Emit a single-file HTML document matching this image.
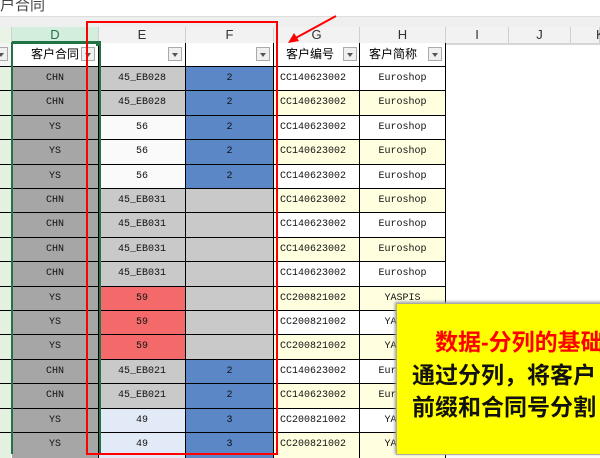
<!DOCTYPE html><html><head><meta charset="utf-8"><style>
body{margin:0;width:600px;height:445px;overflow:hidden;background:#fff;position:relative;font-family:"Liberation Sans","Noto Sans CJK SC",sans-serif}
.a{position:absolute}
.r{position:absolute;left:0;width:600px;height:26px}
.r div{position:absolute;top:0;height:26px;border-top:1px solid #000;box-sizing:border-box;text-align:center;line-height:24px;font-family:"Liberation Mono","Noto Sans CJK SC",monospace;font-size:10px;color:#111}
.c0{left:0;width:11px;background:#e4f1e0}
.cd{left:12px;width:87px;background:#a6a6a6;border-right:1px solid #000}
.ce{left:99px;width:87px;background:#c9c9c9;border-right:1px solid #000}
.cf{left:186px;width:88px;background:#c9c9c9;border-right:1px solid #000}
.cg{left:274px;width:86px;background:#fff;border-right:1px solid #000;text-align:left!important;padding-left:6px}
.ch{left:360px;width:86px;background:#fff;border-right:1px solid #000}
.y{background:#ffffe0!important}
.b{background:#5b87c7!important}
.w{background:#fafafa!important}
.p{background:#f46a6a!important}
.lb{background:#e3eaf7!important}
.hd{position:absolute;top:27px;height:16px;line-height:16px;text-align:center;font-size:13px;color:#333;background:#f2f2f2;border-right:1px solid #d0d0d0}
.fl{position:absolute;top:43px;height:23px;line-height:22px;font-size:12px;background:#fff;border-right:1px solid #000;text-align:center;box-sizing:border-box}
.dd{position:absolute;top:4px;width:14px;height:14px;border:1px solid #aaa;background:#f0f0f0;box-sizing:border-box}
.dd:after{content:"";position:absolute;left:3px;top:5px;border-left:3.5px solid transparent;border-right:3.5px solid transparent;border-top:4px solid #555}
</style></head><body>
<div class="a" style="left:0;top:-6px;font-size:15px;color:#444">户合同</div>
<div class="a" style="left:0;top:16px;width:600px;height:11px;background:#efefef;border-top:1px solid #ddd"></div>
<div class="hd" style="left:0;width:11px;background:#e9f3e6"></div>
<div class="hd" style="left:12px;width:86px;background:#d3eedd;color:#217346;border-bottom:2px solid #217346;height:14px">D</div>
<div class="hd" style="left:99px;width:86px">E</div>
<div class="hd" style="left:186px;width:87px">F</div>
<div class="hd" style="left:274px;width:85px">G</div>
<div class="hd" style="left:360px;width:85px">H</div>
<div class="hd" style="left:446px;width:62px">I</div>
<div class="hd" style="left:509px;width:61px">J</div>
<div class="hd" style="left:571px;width:29px;text-align:left;padding-left:25px;box-sizing:border-box">K</div>
<div class="a" style="left:0;top:43px;width:600px;height:2px;background:#d6d6d6"></div>
<div class="fl" style="left:0;width:12px;background:#f4f4f4"><div class="dd" style="left:-6px"></div></div>
<div class="fl" style="left:12px;width:87px">客户合同<div class="dd" style="left:69px"></div></div>
<div class="fl" style="left:99px;width:87px"><div class="dd" style="left:69px"></div></div>
<div class="fl" style="left:186px;width:88px"><div class="dd" style="left:70px"></div></div>
<div class="fl" style="left:274px;width:86px;text-align:left;padding-left:12px">客户编号<div class="dd" style="left:69px"></div></div>
<div class="fl" style="left:360px;width:86px;text-align:left;padding-left:9px">客户简称<div class="dd" style="left:68px"></div></div>

<div class="r" style="top:66px"><div class="c0"></div><div class="cd">CHN</div><div class="ce">45_EB028</div><div class="cf b">2</div><div class="cg">CC140623002</div><div class="ch">Euroshop</div></div>
<div class="r" style="top:90px"><div class="c0"></div><div class="cd">CHN</div><div class="ce">45_EB028</div><div class="cf b">2</div><div class="cg y">CC140623002</div><div class="ch y">Euroshop</div></div>
<div class="r" style="top:115px"><div class="c0"></div><div class="cd">YS</div><div class="ce w">56</div><div class="cf b">2</div><div class="cg">CC140623002</div><div class="ch">Euroshop</div></div>
<div class="r" style="top:139px"><div class="c0"></div><div class="cd">YS</div><div class="ce w">56</div><div class="cf b">2</div><div class="cg y">CC140623002</div><div class="ch y">Euroshop</div></div>
<div class="r" style="top:164px"><div class="c0"></div><div class="cd">YS</div><div class="ce w">56</div><div class="cf b">2</div><div class="cg">CC140623002</div><div class="ch">Euroshop</div></div>
<div class="r" style="top:188px"><div class="c0"></div><div class="cd">CHN</div><div class="ce">45_EB031</div><div class="cf"></div><div class="cg y">CC140623002</div><div class="ch y">Euroshop</div></div>
<div class="r" style="top:212px"><div class="c0"></div><div class="cd">CHN</div><div class="ce">45_EB031</div><div class="cf"></div><div class="cg">CC140623002</div><div class="ch">Euroshop</div></div>
<div class="r" style="top:237px"><div class="c0"></div><div class="cd">CHN</div><div class="ce">45_EB031</div><div class="cf"></div><div class="cg y">CC140623002</div><div class="ch y">Euroshop</div></div>
<div class="r" style="top:261px"><div class="c0"></div><div class="cd">CHN</div><div class="ce">45_EB031</div><div class="cf"></div><div class="cg">CC140623002</div><div class="ch">Euroshop</div></div>
<div class="r" style="top:286px"><div class="c0"></div><div class="cd">YS</div><div class="ce p">59</div><div class="cf"></div><div class="cg y">CC200821002</div><div class="ch y">YASPIS</div></div>
<div class="r" style="top:310px"><div class="c0"></div><div class="cd">YS</div><div class="ce p">59</div><div class="cf"></div><div class="cg">CC200821002</div><div class="ch">YASPIS</div></div>
<div class="r" style="top:334px"><div class="c0"></div><div class="cd">YS</div><div class="ce p">59</div><div class="cf"></div><div class="cg y">CC200821002</div><div class="ch y">YASPIS</div></div>
<div class="r" style="top:359px"><div class="c0"></div><div class="cd">CHN</div><div class="ce">45_EB021</div><div class="cf b">2</div><div class="cg">CC140623002</div><div class="ch">Euroshop</div></div>
<div class="r" style="top:383px"><div class="c0"></div><div class="cd">CHN</div><div class="ce">45_EB021</div><div class="cf b">2</div><div class="cg y">CC140623002</div><div class="ch y">Euroshop</div></div>
<div class="r" style="top:408px"><div class="c0"></div><div class="cd">YS</div><div class="ce lb">49</div><div class="cf b">3</div><div class="cg">CC200821002</div><div class="ch">YASPIS</div></div>
<div class="r" style="top:432px"><div class="c0"></div><div class="cd">YS</div><div class="ce lb">49</div><div class="cf b">3</div><div class="cg y">CC200821002</div><div class="ch y">YASPIS</div></div>

<div class="a" style="left:11px;top:42px;width:86px;height:410px;border:2px solid #217346;border-bottom:none"></div>
<div class="a" style="left:96px;top:41px;width:5px;height:5px;background:#217346"></div>
<div class="a" style="left:86px;top:21px;width:188px;height:430px;border:2px solid #f00"></div>
<svg class="a" style="left:280px;top:8px" width="70" height="40"><line x1="56" y1="8" x2="12" y2="32" stroke="#f00" stroke-width="2"/><path d="M8 35 L14 25 L19 33 Z" fill="#f00"/></svg>

<div class="a" style="left:396px;top:303px;width:210px;height:150px;background:#ffff00;box-shadow:-1px -1px 3px #999;border:1px solid #aaa"></div>
<div class="a" style="left:435px;top:323px;font-size:23px;font-weight:bold;color:#f00;white-space:nowrap">数据-分列的基础</div>
<div class="a" style="left:412px;top:356px;font-size:23px;font-weight:bold;color:#111;white-space:nowrap">通过分列，将客户</div>
<div class="a" style="left:412px;top:388px;font-size:23px;font-weight:bold;color:#111;white-space:nowrap">前缀和合同号分割</div>
</body></html>
